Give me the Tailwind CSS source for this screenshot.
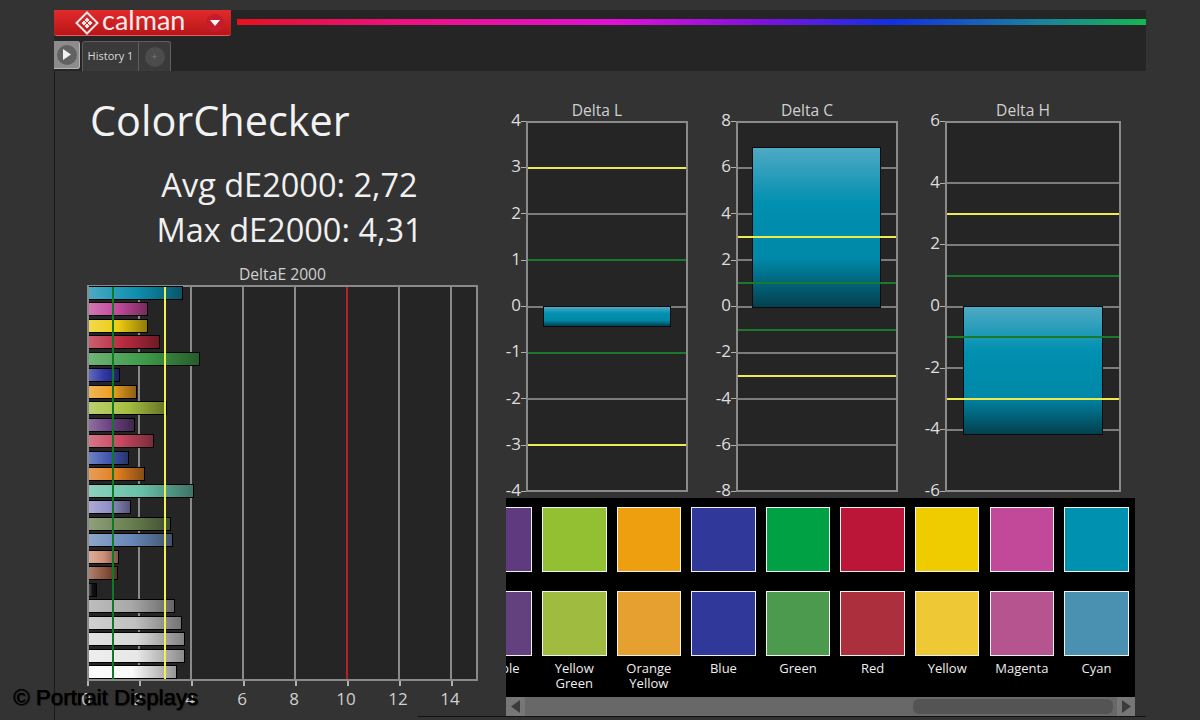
<!DOCTYPE html>
<html lang="en">
<head>
    <meta charset="UTF-8">
    <title>ColorChecker</title>
    <script src="https://cdn.jsdelivr.net/npm/@tailwindcss/browser@4"></script>
</head>
<body class="bg-[#333333] h-[720px] w-[1200px] overflow-hidden relative font-['Open_Sans',sans-serif] text-[#e4e4e4]">

<div class="ml-[54px] mt-[10px] w-[1092px] h-[710px] flex flex-col">

    <!-- Header -->
    <div class="h-[61px] bg-[#252525] flex flex-col shrink-0">
        <div class="h-[31px] flex items-start gap-[6px]">
            <div class="w-[177px] h-[26px] flex items-center rounded-b-[3px] bg-linear-to-b from-[#e22a2c] to-[#b81618] border-b border-[#e85a5a] shrink-0">
                <svg class="ml-[21px] w-[24px] h-[24px]" viewBox="0 0 24 24" fill="none">
                    <path d="M12 1.5 22.5 12 12 22.5 1.5 12Z" stroke="#f6e6e6" stroke-width="2"/>
                    <path d="M12 6 15 9 12 12 9 9ZM6 12 9 9 12 12 9 15ZM18 12 15 15 12 12 15 9ZM12 18 9 15 12 12 15 15Z" fill="#f6e6e6" stroke="#c92022" stroke-width=".8"/>
                </svg>
                <span class="ml-[3px] -mt-[5px] w-[102px] text-[27px] leading-[24px] font-['Lato',sans-serif] text-[#f8eaea]">calman</span>
                <div class="w-[18px] h-[18px] ml-[2px] rounded-full bg-[#c41c2a] flex items-center justify-center">
                    <svg class="w-[10px] h-[6px]" viewBox="0 0 10 6"><path d="M0 0H10L5 6Z" fill="#fff"/></svg>
                </div>
            </div>
            <div class="flex-1 h-[6px] mt-[9px] bg-[linear-gradient(90deg,#e8101c_0%,#e8104a_7%,#f01080_18%,#e010d8_42%,#8010e0_58%,#1030e8_72%,#1a80a0_88%,#14b850_100%)]"></div>
        </div>
        <div class="flex items-end h-[30px] gap-[2px]">
            <div class="w-[26px] h-[28px] mb-[2px] rounded-r-[3px] bg-[#8c8c8c] border-r border-b border-[#b8b8b8] flex items-center justify-center">
                <div class="w-[20px] h-[20px] rounded-full bg-[#626262] flex items-center justify-center">
                    <svg class="w-[8px] h-[11px] ml-[1px]" viewBox="0 0 8 11"><path d="M0 0 8 5.5 0 11Z" fill="#f2f2f2"/></svg>
                </div>
            </div>
            <div class="w-[89px] h-[30px] flex rounded-t-[3px] bg-[#3a3a3a] border-t border-x border-[#5e5e5e]">
                <div class="w-[56px] flex items-center justify-center text-[11px] text-[#d8d8d8] border-r border-[#5e5e5e]">History 1</div>
                <div class="flex-1 flex items-center justify-center">
                    <div class="w-[20px] h-[20px] rounded-full bg-[#4c4c4c] text-[#777] text-[11px] flex items-center justify-center">+</div>
                </div>
            </div>
        </div>
    </div>

    <!-- Content -->
    <div class="flex flex-1 border-l border-[#1a1a1a]">
        <!-- Left column -->
        <div class="w-[451px] shrink-0 flex flex-col">
            <h1 class="ml-[35px] mt-[21px] text-[41.4px] leading-[56px] text-[#f2f2f2]">ColorChecker</h1>
            <div class="mt-[14px] ml-[34px] w-[401px] text-center text-[32.5px] leading-[45px] text-[#f0f0f0]">
                <p>Avg dE2000: 2,72</p>
                <p>Max dE2000: 4,31</p>
            </div>
            <div class="mt-[12px] ml-[32px] w-[391px] text-center text-[15.7px] leading-[20px] text-[#d0d0d0]">DeltaE 2000</div>
            <div class="ml-[32px] mt-px relative">
                <div id="deltaE" class="relative w-[391px] h-[396px] bg-[#252525] border-2 border-[#8a8a8a]"></div>
                <div id="deltaEAxis" class="relative h-[30px] w-[391px] text-[17px] text-[#cfcfcf]"></div>
            </div>
        </div>

        <!-- Right column -->
        <div class="flex flex-col w-[629px]">
            <div id="deltas" class="flex pl-[20px] mt-[29px] h-[392px]"></div>

            <div class="mt-[6px] h-[199px] bg-black overflow-hidden">
                <div id="swatches" class="flex gap-[10.1px] -ml-[38.6px] pt-[9px]"></div>
            </div>
            <div class="h-[19px] flex bg-[#686868]">
                <div class="w-[19px] flex items-center justify-center bg-[#777]">
                    <svg class="w-[9px] h-[13px]" viewBox="0 0 9 13"><path d="M9 0V13L0 6.5Z" fill="#3c3c3c"/></svg>
                </div>
                <div class="flex-1 flex justify-end py-[2px] pr-[4px]">
                    <div class="w-[200px] rounded-[6px] bg-[#545454]"></div>
                </div>
                <div class="w-[18px] flex items-center justify-center bg-[#777]">
                    <svg class="w-[9px] h-[13px]" viewBox="0 0 9 13"><path d="M0 0V13L9 6.5Z" fill="#3c3c3c"/></svg>
                </div>
            </div>
        </div>
    </div>
</div>

<!-- Overlays -->
<div class="absolute left-[418px] top-[716px] w-[728px] h-px bg-[#111]"></div>
<div class="absolute left-[13px] top-[685px] text-[22.3px] leading-[26px] font-['Liberation_Sans',sans-serif] text-black [text-shadow:0.6px_0_0_#000,1px_1px_1px_rgba(0,0,0,0.55)]">© Portrait Displays</div>

<script>
    // DeltaE 2000 horizontal bars: end x in screenshot pixels and base colour
    const bars = [
        [182, '#0f8fb0'], [147, '#c2499a'], [147, '#eecc10'], [159, '#b82a3e'],
        [199, '#3e9a48'], [119, '#3038a5'], [136, '#eb9f20'], [166, '#a6bf40'],
        [134, '#6a3f80'], [153, '#c84860'], [128, '#4058b0'], [144, '#e07f20'],
        [193, '#68c0a8'], [130, '#9090c8'], [170, '#6a8050'], [172, '#6888b8'],
        [118, '#d09078'], [117, '#905840'], [96, '#111111'], [174, '#a8a8a8'],
        [181, '#c0c0c0'], [184, '#d8d8d8'], [184, '#e8e8e8'], [176, '#fafafa']
    ];
    const deltaE = document.getElementById('deltaE');
    const axis = document.getElementById('deltaEAxis');
    const px = (v) => 26 * v - 2;
    let html = '';
    for (let v = 2; v <= 14; v += 2) {
        html += `<div class="absolute top-0 bottom-0 w-[2px] bg-[#8a8a8a]" style="left:${px(v) - 1}px"></div>`;
    }
    bars.forEach(([end, color], i) => {
        html += `<div class="absolute left-0 h-[14px] border-y-[1.5px] border-r-[1.5px] border-black bg-linear-to-r from-white/25 via-transparent to-black/40" style="top:${i * 16.48 - 1}px;width:${end - 88}px;background-color:${color}"></div>`;
    });
    html += `<div class="absolute top-0 bottom-0 w-[2px] bg-[#0f7a24]" style="left:${px(1) - 1}px"></div>`;
    html += `<div class="absolute top-0 bottom-0 w-[2px] bg-[#f0f050]" style="left:${px(3) - 1}px"></div>`;
    html += `<div class="absolute top-0 bottom-0 w-[2px] bg-[#b82028]" style="left:${px(10) - 1}px"></div>`;
    deltaE.innerHTML = html;

    let axisHtml = '';
    for (let v = 0; v <= 14; v += 2) {
        axisHtml += `<div class="absolute top-0 w-[2px] h-[5px] bg-[#b0b0b0]" style="left:${26 * v}px"></div>`;
        axisHtml += `<span class="absolute top-[6px] w-[30px] -ml-[15px] text-center leading-[24px]" style="left:${26 * v - 1}px">${v}</span>`;
    }
    axis.innerHTML = axisHtml;

    // Delta L / C / H charts; value range is symmetric around zero
    const charts = [
        { title: 'Delta L', max: 4, step: 1, width: 162, gap: 48, bar: [0, -0.42], inset: [15, 15] },
        { title: 'Delta C', max: 8, step: 2, width: 162, gap: 47, bar: [6.85, 0], inset: [14, 15] },
        { title: 'Delta H', max: 6, step: 2, width: 176, gap: 0, bar: [0, -4.15], inset: [16, 16] }
    ];
    document.getElementById('deltas').innerHTML = charts.map((c) => {
        const y = (v) => (c.max - v) / (2 * c.max) * 370 - 1.5;
        let inner = '';
        let labels = '';
        for (let v = c.max; v >= -c.max; v -= c.step) {
            if (Math.abs(v) !== c.max) {
                inner += `<div class="absolute left-0 right-0 h-[2px] bg-[#7c7c7c]" style="top:${y(v) - 1}px"></div>`;
            }
            const text = v < 0 ? '-' + Math.abs(v) : String(v);
            labels += `<span class="absolute -left-[32px] w-[30px] text-right text-[17px] leading-[20px] text-[#dedede]" style="top:${y(v) - 11.5}px">${text}<span class="inline-block w-[5px] h-px bg-[#b0b0b0] align-middle"></span></span>`;
        }
        const top = y(c.bar[0]);
        const height = y(c.bar[1]) - top;
        inner += `<div class="absolute border-[1.5px] border-[#0a0a0a] bg-[linear-gradient(180deg,#4fa9c4_0%,#0090b0_35%,#0088a8_70%,#03404f_100%)]" style="left:${c.inset[0]}px;right:${c.inset[1]}px;top:${top - 1}px;height:${height + 2}px"></div>`;
        [[1, 'bg-[#1a7a2c]'], [-1, 'bg-[#1a7a2c]'], [3, 'bg-[#ecec50]'], [-3, 'bg-[#ecec50]']].forEach(([v, cls]) => {
            inner += `<div class="absolute left-0 right-0 h-[2px] ${cls}" style="top:${y(v) - 1}px"></div>`;
        });
        return `<div class="shrink-0" style="width:${c.width}px;margin-right:${c.gap}px">
            <div class="h-[21px] -ml-[20px] text-center text-[15.6px] leading-[20px] text-[#d0d0d0]">${c.title}</div>
            <div class="relative h-[371px] bg-[#252525] border-2 border-[#8a8a8a]">${inner}${labels}</div>
        </div>`;
    }).join('');

    // Swatch columns: target colour, actual colour, label
    const swatches = [
        ['#5f3a7f', '#63417f', 'Purple'], ['#93c032', '#a0bc40', 'Yellow Green'],
        ['#ee9f10', '#e6a030', 'Orange Yellow'], ['#303899', '#30399a', 'Blue'],
        ['#00a045', '#4c9a4e', 'Green'], ['#bb1538', '#ac2f3e', 'Red'],
        ['#eecc00', '#eec835', 'Yellow'], ['#c2499a', '#b5548f', 'Magenta'],
        ['#0090b0', '#4a90b0', 'Cyan']
    ];
    document.getElementById('swatches').innerHTML = swatches.map(([a, b, label]) => `
        <div class="w-[64.5px] shrink-0 flex flex-col items-center">
            <div class="w-full h-[65px] border-[1.5px] border-[#f0f0f0]" style="background:${a}"></div>
            <div class="w-full h-[65px] mt-[19px] border-[1.5px] border-[#f0f0f0]" style="background:${b}"></div>
            <div class="mt-[5px] w-full text-center text-[13px] leading-[15px] text-[#eeeeee]">${label}</div>
        </div>`).join('');
</script>

</body>
</html>
